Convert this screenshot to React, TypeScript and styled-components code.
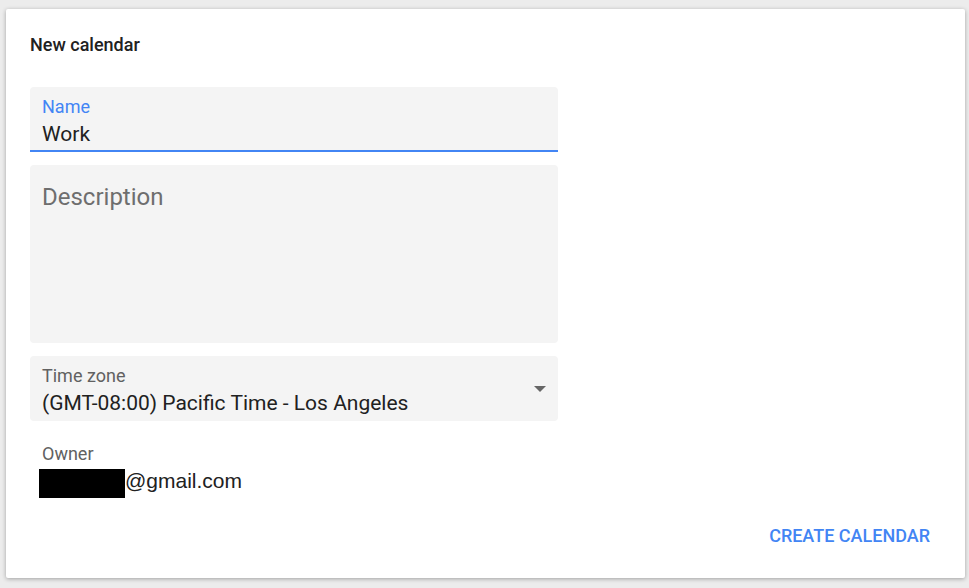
import React from "react";
import styled, { createGlobalStyle } from "styled-components";

const Global = createGlobalStyle`
  html, body { margin: 0; padding: 0; background: #ececec; }
  body { font-family: Roboto, "Noto Sans", sans-serif; }
`;

const Page = styled.div`
  width: 969px;
  height: 588px;
  box-sizing: border-box;
  padding: 9px 4px 10px 6px;
  display: flex;
`;

const Card = styled.div`
  flex: 1;
  background: #fff;
  border-radius: 2px;
  box-shadow: 0 1px 4px rgba(0, 0, 0, 0.32);
  padding: 24px 24px 0 24px;
  display: flex;
  flex-direction: column;
`;

const Title = styled.h1`
  margin: 0;
  font-size: 18px;
  font-weight: 500;
  color: #212121;
  line-height: 24px;
`;

const Form = styled.div`
  width: 528px;
  margin-top: 30px;
  display: flex;
  flex-direction: column;
  gap: 13px;
`;

const Field = styled.div<{ $active?: boolean; $tall?: boolean }>`
  position: relative;
  background: #f4f4f4;
  border-radius: 4px 4px ${(p) => (p.$active ? "0 0" : "4px 4px")};
  border-bottom: ${(p) => (p.$active ? "2px solid #4285f4" : "none")};
  height: ${(p) => (p.$tall ? "178px" : p.$active ? "63px" : "65px")};
  box-sizing: content-box;
  padding: 0 12px;
  display: flex;
  flex-direction: column;
`;

const Label = styled.div<{ $active?: boolean }>`
  font-size: 18px;
  line-height: 22px;
  margin-top: 9px;
  color: ${(p) => (p.$active ? "#4285f4" : "#616161")};
`;

const Value = styled.div`
  font-size: 21px;
  line-height: 26px;
  margin-top: 3px;
  color: #212121;
`;

const Placeholder = styled.div`
  font-size: 24px;
  line-height: 28px;
  color: #6e6e6e;
  margin-top: 18px;
`;

const Arrow = styled.div`
  position: absolute;
  right: 12px;
  top: 30px;
  width: 0;
  height: 0;
  border-left: 6px solid transparent;
  border-right: 6px solid transparent;
  border-top: 6px solid #666;
`;

const Owner = styled.div`
  padding: 0 12px;
  display: flex;
  flex-direction: column;
`;

const Email = styled.div`
  font-family: "Liberation Sans", Arial, sans-serif;
  font-size: 21px;
  line-height: 28px;
  margin-top: 2px;
  color: #212121;
  display: flex;
  align-items: flex-start;
  margin-left: -3px;
`;

const Redact = styled.span`
  display: inline-block;
  width: 86px;
  height: 29px;
  background: #000;
  margin-top: 2px;
`;

const Footer = styled.div`
  margin-top: auto;
  display: flex;
  justify-content: flex-end;
  padding-bottom: 32px;
`;

const Button = styled.button`
  background: none;
  border: none;
  padding: 0;
  margin-right: 11px;
  font-family: Roboto, sans-serif;
  font-weight: 500;
  font-size: 18px;
  color: #4285f4;
  text-transform: uppercase;
  cursor: pointer;
`;

export default function App() {
  return (
    <>
      <Global />
      <Page>
        <Card>
          <Title>New calendar</Title>
          <Form>
            <Field $active>
              <Label $active>Name</Label>
              <Value>Work</Value>
            </Field>
            <Field $tall>
              <Placeholder>Description</Placeholder>
            </Field>
            <Field>
              <Label>Time zone</Label>
              <Value>(GMT-08:00) Pacific Time - Los Angeles</Value>
              <Arrow />
            </Field>
            <Owner>
              <Label>Owner</Label>
              <Email>
                <Redact />
                @gmail.com
              </Email>
            </Owner>
          </Form>
          <Footer>
            <Button>Create calendar</Button>
          </Footer>
        </Card>
      </Page>
    </>
  );
}
